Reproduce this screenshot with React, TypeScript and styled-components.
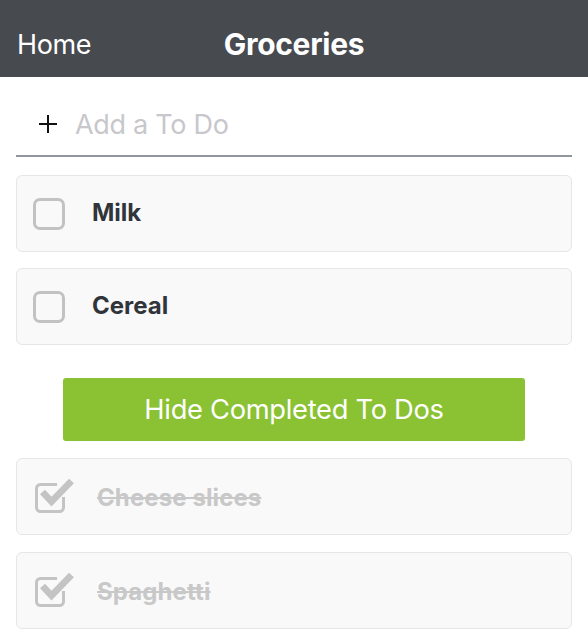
import React from "react";
import styled, { createGlobalStyle } from "styled-components";

const Global = createGlobalStyle`
  html, body { margin: 0; padding: 0; background: #ffffff; }
  body { font-family: Inter, "Noto Sans", Roboto, sans-serif; -webkit-font-smoothing: antialiased; }
`;

const Page = styled.div`
  width: 588px;
  min-height: 640px;
  background: #ffffff;
`;

const NavBar = styled.header`
  height: 77px;
  background: #474a4f;
  display: grid;
  grid-template-columns: 1fr auto 1fr;
  align-items: center;
  padding: 11px 17px 0;
  box-sizing: border-box;
  color: #ffffff;
`;

const NavBack = styled.span`
  font-size: 27px;
  font-weight: 400;
  letter-spacing: -0.4px;
  justify-self: start;
`;

const NavTitle = styled.h1`
  margin: 0;
  font-size: 30px;
  font-weight: 700;
  letter-spacing: -0.3px;
`;

const AddRow = styled.div`
  margin: 0 16px;
  height: 80px;
  display: flex;
  align-items: center;
  padding: 16px 0 0 22px;
  gap: 17px;
  border-bottom: 2px solid #8f969d;
  box-sizing: border-box;
`;

const PlusIcon = styled.svg`
  width: 20px;
  height: 20px;
  flex: none;
`;

const AddInput = styled.input`
  border: none;
  outline: none;
  background: transparent;
  font-family: inherit;
  font-size: 27px;
  color: #333;
  padding: 0;
  flex: 1;
  letter-spacing: -0.3px;
  &::placeholder { color: #c7c7cc; }
`;

const List = styled.div`
  padding: 18px 16px 0;
  display: flex;
  flex-direction: column;
`;

const Card = styled.div<{ $gap?: number }>`
  height: 77px;
  box-sizing: border-box;
  background: #f9f9f9;
  border: 1px solid #e6e6e6;
  border-radius: 6px;
  display: flex;
  align-items: center;
  padding-left: 16px;
  margin-bottom: ${(p) => p.$gap ?? 16}px;
`;

const Box = styled.span`
  width: 32px;
  height: 32px;
  box-sizing: border-box;
  border: 3px solid #c2c2c2;
  border-radius: 7px;
  flex: none;
  margin-right: 27px;
`;

const CheckIcon = styled.svg`
  width: 40px;
  height: 36px;
  flex: none;
  margin: -2px 22px 0 2px;
`;

const Label = styled.span<{ $done?: boolean }>`
  font-size: 24px;
  font-weight: 700;
  color: ${(p) => (p.$done ? "#c8c8c8" : "#31353b")};
  text-decoration: ${(p) => (p.$done ? "line-through" : "none")};
  text-decoration-thickness: 2px;
  letter-spacing: ${(p) => (p.$done ? "0.1px" : "0")};
  margin-top: ${(p) => (p.$done ? "2px" : "-2px")};
`;

const HideButton = styled.button`
  align-self: center;
  width: 462px;
  height: 63px;
  margin: 17px 0 17px;
  border: none;
  border-radius: 3px;
  background: #8ac233;
  color: #ffffff;
  font-family: inherit;
  font-size: 27.3px;
  font-weight: 400;
  letter-spacing: -0.3px;
`;

const Checked = () => (
  <CheckIcon viewBox="0 0 40 36">
    <path
      d="M28.5 19 V29.5 a4 4 0 0 1 -4 4 H5.5 a4 4 0 0 1 -4 -4 V10.5 a4 4 0 0 1 4 -4 H22"
      fill="none"
      stroke="#c4c4c4"
      strokeWidth="3"
    />
    <path
      d="M7.5 14 L16.5 23.5 L36.5 3"
      fill="none"
      stroke="#c4c4c4"
      strokeWidth="6.8"
      strokeLinejoin="miter"
    />
  </CheckIcon>
);

type Item = { text: string; done: boolean };
const active: Item[] = [
  { text: "Milk", done: false },
  { text: "Cereal", done: false },
];
const done: Item[] = [
  { text: "Cheese slices", done: true },
  { text: "Spaghetti", done: true },
];

export default function App() {
  return (
    <Page>
      <Global />
      <NavBar>
        <NavBack>Home</NavBack>
        <NavTitle>Groceries</NavTitle>
        <span />
      </NavBar>
      <AddRow>
        <PlusIcon viewBox="0 0 20 20">
          <path d="M10 1 V19 M1 10 H19" stroke="#111" strokeWidth="2" />
        </PlusIcon>
        <AddInput placeholder="Add a To Do" />
      </AddRow>
      <List>
        {active.map((it) => (
          <Card key={it.text}>
            <Box />
            <Label>{it.text}</Label>
          </Card>
        ))}
        <HideButton>Hide Completed To Dos</HideButton>
        {done.map((it) => (
          <Card key={it.text} $gap={17}>
            <Checked />
            <Label $done>{it.text}</Label>
          </Card>
        ))}
      </List>
    </Page>
  );
}
